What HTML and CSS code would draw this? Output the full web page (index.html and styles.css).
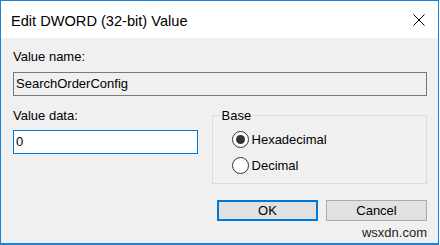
FILE: index.html
```html
<!DOCTYPE html>
<html lang="en">
<head>
  <meta charset="UTF-8">
  <title>Edit DWORD (32-bit) Value</title>
  <link rel="stylesheet" href="styles.css">
</head>
<body>
  <div class="window">
    <div class="titlebar">
      <span class="title">Edit DWORD (32-bit) Value</span>
      <svg class="close" width="12" height="12" viewBox="0 0 12 12">
        <path d="M0.5 0.5 L11.5 11.5 M11.5 0.5 L0.5 11.5" stroke="#000" stroke-width="1" fill="none"/>
      </svg>
    </div>

    <div class="content">
      <div class="label">Value name:</div>
      <div class="textbox readonly">SearchOrderConfig</div>

      <div class="row">
        <div class="data-col">
          <div class="label">Value data:</div>
          <div class="textbox focused">0</div>
        </div>

        <fieldset class="group">
          <legend>Base</legend>
          <div class="radio first"><span class="dot checked"></span>Hexadecimal</div>
          <div class="radio"><span class="dot"></span>Decimal</div>
        </fieldset>
      </div>

      <div class="buttons">
        <div class="btn default">OK</div>
        <div class="btn">Cancel</div>
      </div>
      <div class="watermark">wsxdn.com</div>
    </div>
  </div>
</body>
</html>
```

FILE: styles.css
```css
body { margin: 0; font-family: "Liberation Sans", Arial, sans-serif; color: #000; background: #fff; }
.window { width: 439px; height: 245px; box-sizing: border-box; border: 1px solid #1a82d9; border-bottom-width: 2px; background: #f0f0f0; }
.titlebar { height: 35px; padding: 2px 13px 0 10px; background: #fff; display: flex; align-items: center; justify-content: space-between; }
.title { font-size: 14.6px; }
.close { margin-top: -2px; }
.content { padding: 11px 11px 0 12px; font-size: 13px; line-height: 15px; }
.label { height: 15px; }
.textbox { margin-top: 8px; height: 24px; box-sizing: border-box; line-height: 22px; padding-left: 2px; border: 1px solid #7a7a7a; }
.textbox.readonly { width: 414px; background: #f0f0f0; }
.row { display: flex; margin-top: 12px; }
.data-col { width: 185px; }
.data-col .textbox { margin-top: 7px; }
.textbox.focused { background: #fff; border-color: #0078d7; }
.group { margin: 0 0 0 14px; padding: 0 0 9px 19px; width: 216px; box-sizing: border-box; border: 1px solid #dcdcdc; }
.group legend { margin-left: -12px; padding: 0 2px; line-height: 15px; }
.radio { display: flex; align-items: center; height: 17px; line-height: 17px; margin-top: 9px; }
.radio.first { margin-top: 8px; }
.dot { width: 15px; height: 15px; border: 1px solid #333; border-radius: 50%; background: #fff; margin-right: 3px; position: relative; }
.dot.checked::after { content: ""; position: absolute; left: 3px; top: 3px; width: 9px; height: 9px; border-radius: 50%; background: #333; }
.buttons { display: flex; justify-content: flex-end; gap: 8px; margin-top: 16px; }
.btn { width: 101px; height: 21px; box-sizing: border-box; border: 1px solid #adadad; background: #e1e1e1; text-align: center; line-height: 19px; }
.btn.default { border: 2px solid #0078d7; line-height: 17px; }
.watermark { text-align: right; margin-top: 4px; color: #222; }
```
